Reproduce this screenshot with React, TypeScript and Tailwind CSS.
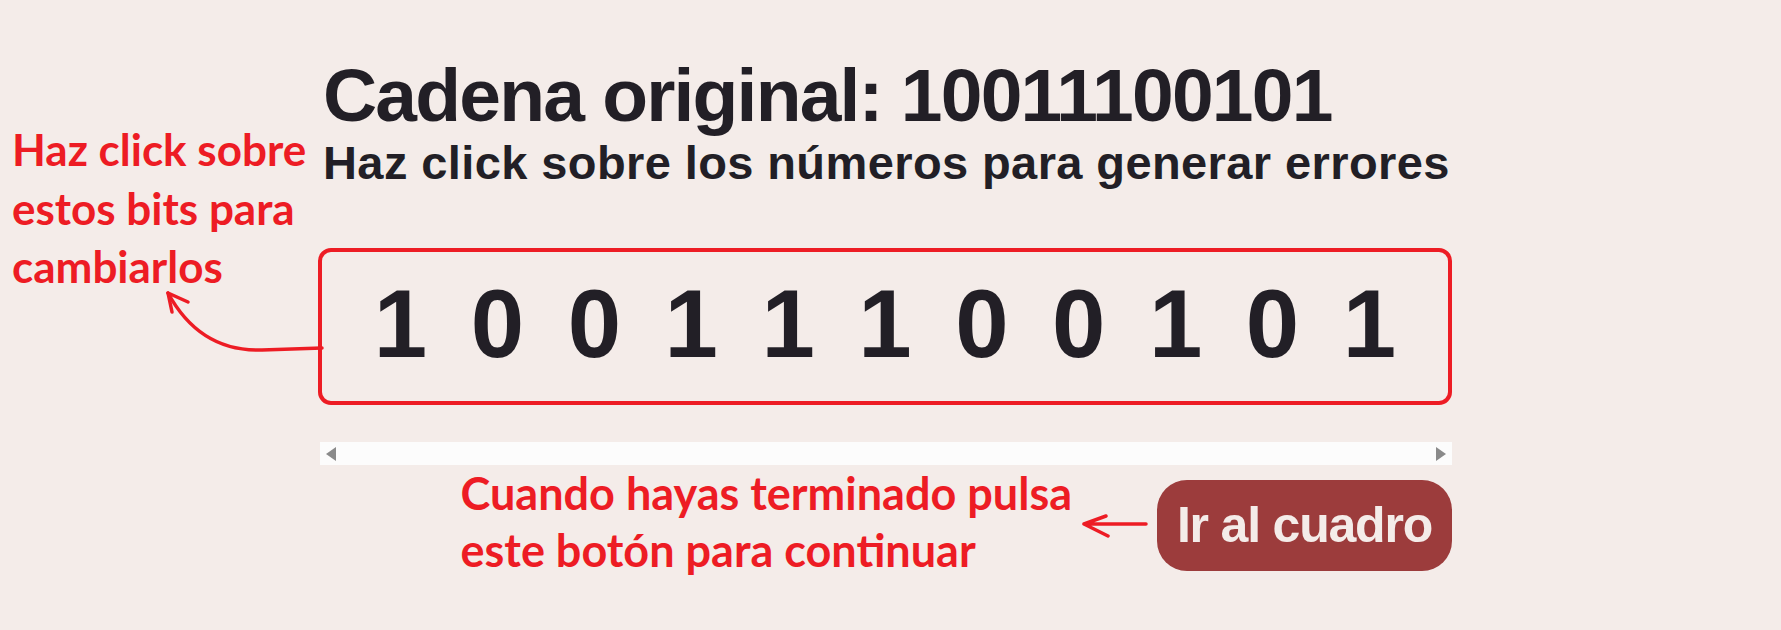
import React from "react";

const bits = ["1", "0", "0", "1", "1", "1", "0", "0", "1", "0", "1"];

const App = () => {
  return (
    <main className="relative min-h-[630px] w-full overflow-hidden bg-[#f4ece9] font-['Liberation_Sans',Arial,sans-serif] text-[#221f26]">
      {/* Left callout */}
      <div className="absolute left-[12px] top-[120px] w-[305px] font-['Lato',sans-serif] text-[44px] font-bold leading-[58.5px] text-[#ed1c24]">
        Haz click sobre
        <br />
        estos bits para
        <br />
        cambiarlos
      </div>
      <svg
        className="absolute left-[150px] top-[280px]"
        width="180"
        height="80"
        viewBox="150 280 180 80"
        fill="none"
        stroke="#ed1c24"
        strokeWidth="3.5"
        strokeLinecap="round"
      >
        <path d="M322 348 L262 350 Q200 352 168 293" />
        <path d="M168 293 L188 302 M168 293 L172 312" />
      </svg>

      <div className="ml-[318px] flex w-[1134px] flex-col pt-[58px]">
        <h1 className="pl-[5px] text-[75px] font-bold leading-none tracking-[-1.8px]">
          Cadena original: 10011100101
        </h1>
        <h2 className="mt-[6px] pl-[5px] text-[47px] font-bold leading-none tracking-[0.4px]">
          Haz click sobre los números para generar errores
        </h2>

        {/* Bits */}
        <div className="mt-[62px] flex justify-center gap-[43.5px] rounded-[13px] border-4 border-[#ed1c24] pb-[29px] pt-[24px]">
          {bits.map((b, i) => (
            <span key={i} className="cursor-pointer text-[96px] font-bold leading-none">
              {b}
            </span>
          ))}
        </div>

        {/* Scrollbar */}
        <div className="ml-[2px] mt-[37px] flex h-[23px] items-center justify-between bg-[#fcfcfc] px-[6px]">
          <span className="h-0 w-0 border-y-[7px] border-r-[10px] border-y-transparent border-r-[#8a8a8a]" />
          <span className="h-0 w-0 border-y-[7px] border-l-[10px] border-y-transparent border-l-[#8a8a8a]" />
        </div>

        <div className="flex items-start justify-end">
          <div className="font-['Lato',sans-serif] text-[45px] font-bold leading-[57px] text-[#ed1c24]">
            Cuando hayas terminado pulsa
            <br />
            este botón para continuar
          </div>
          <svg
            className="ml-[10px] mt-[45px]"
            width="66"
            height="30"
            viewBox="1082 510 66 30"
            fill="none"
            stroke="#ed1c24"
            strokeWidth="3.5"
            strokeLinecap="round"
          >
            <path d="M1084 524 L1146 524 M1084 524 L1106 516 M1084 524 L1108 536" />
          </svg>
          <button
            type="button"
            className="ml-[9px] mt-[15px] flex h-[91px] w-[295px] items-center justify-center rounded-[30px] bg-[#9c3c3c] text-[50px] font-bold tracking-[-1.2px] text-[#f4ece9]"
          >
            Ir al cuadro
          </button>
        </div>
      </div>
    </main>
  );
};

export default App;
